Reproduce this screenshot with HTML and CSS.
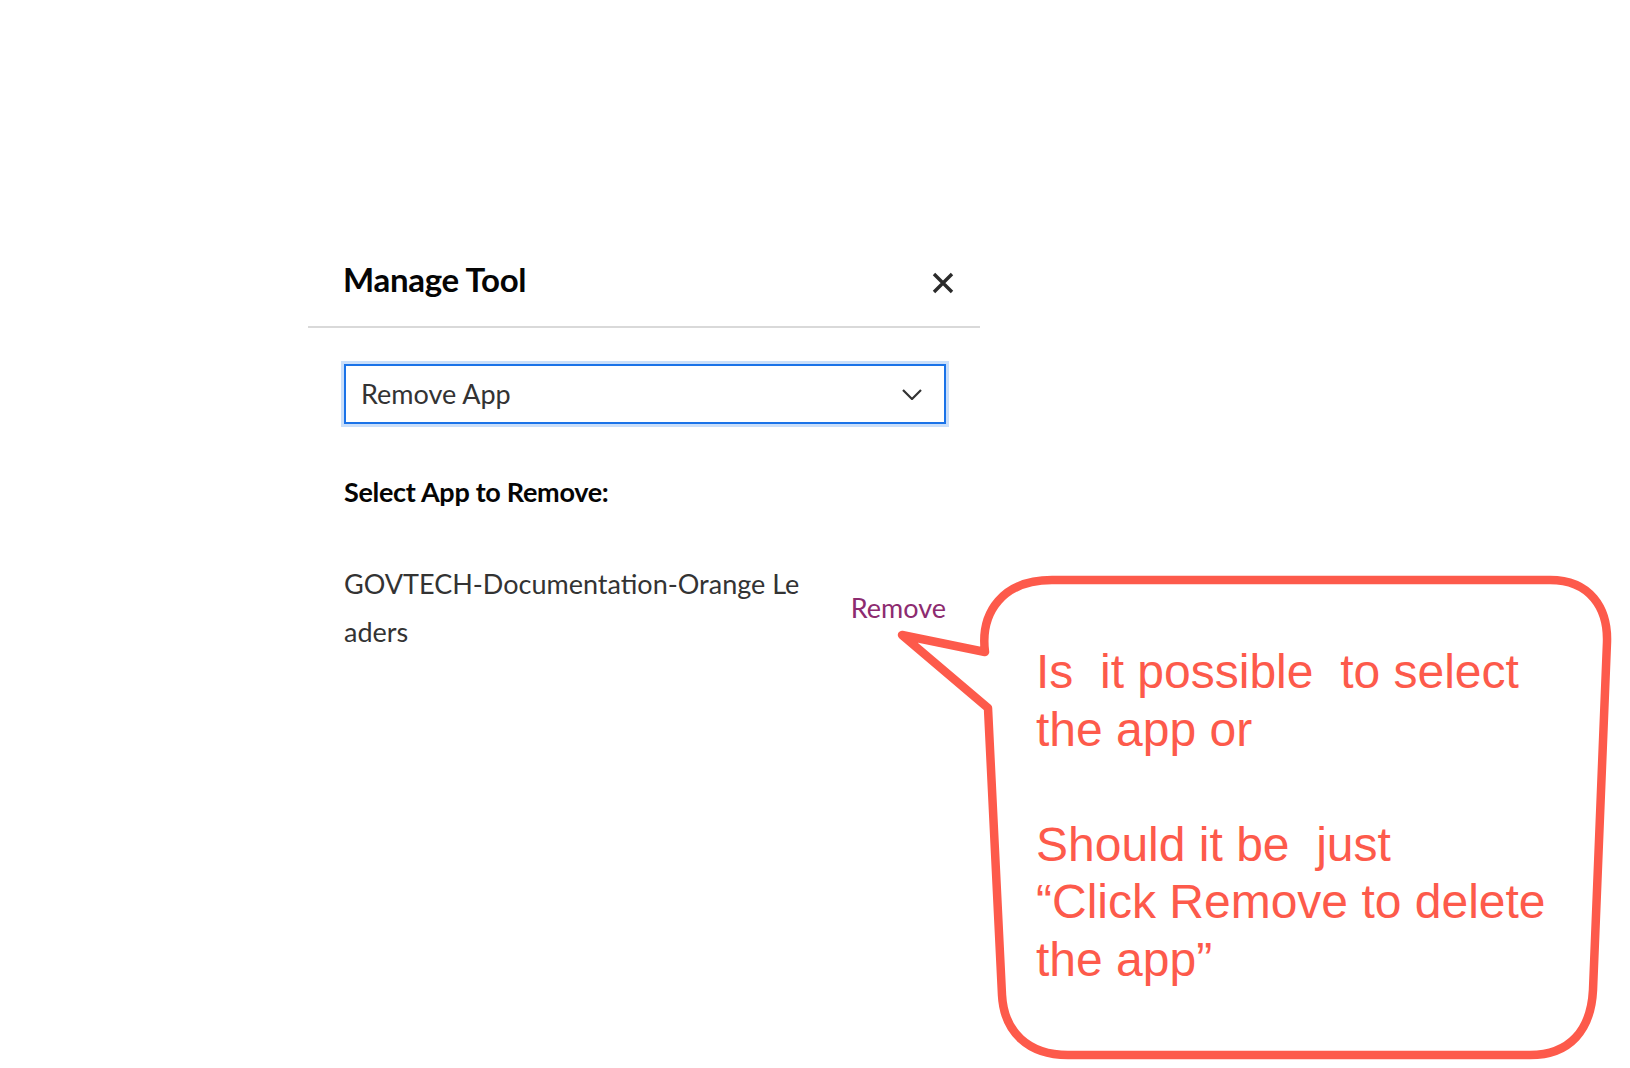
FILE: index.html
```html
<!DOCTYPE html>
<html lang="en">
<head>
<meta charset="utf-8">
<title>Manage Tool</title>
<link rel="stylesheet" href="styles.css">
</head>
<body>
<div class="stage">
  <div class="dialog">
    <div class="dialog-header">
      <h2 class="dialog-title">Manage Tool</h2>
      <button class="close-btn" aria-label="Close">
        <svg width="22" height="22" viewBox="0 0 22 22"><path d="M2 2 L20 20 M20 2 L2 20" stroke="#2b2b2b" stroke-width="3.4" fill="none" stroke-linecap="butt"/></svg>
      </button>
    </div>
    <div class="dialog-body">
      <div class="select">
        <span class="select-value">Remove App</span>
        <svg class="chevron" width="20" height="11" viewBox="0 0 20 11"><path d="M1 1 L10 10 L19 1" stroke="#333" stroke-width="2.2" fill="none"/></svg>
      </div>
      <div class="section-label">Select App to Remove:</div>
      <div class="app-row">
        <div class="app-name">GOVTECH-Documentation-Orange Leaders</div>
        <a class="remove-link" href="#">Remove</a>
      </div>
    </div>
  </div>

  <div class="callout">
    <svg class="callout-shape" width="1630" height="1068" viewBox="0 0 1630 1068">
      <path d="M985 652 C980 612, 1003 580, 1052 580 L1550 580 C1590 580, 1608 608, 1607 642 L1593 990 C1591 1030, 1570 1055, 1530 1055 L1068 1055 C1028 1055, 1004 1032, 1002 995 L988 708 L902 635 Z" fill="#ffffff" stroke="#fd5a4b" stroke-width="8.5" stroke-linejoin="round"/>
    </svg>
    <div class="callout-text">Is  it possible  to select
the app or

Should it be  just
“Click Remove to delete
the app”</div>
  </div>
</div>
</body>
</html>
```

FILE: styles.css
```css
html, body {
  margin: 0;
  padding: 0;
  background: #ffffff;
}

.stage {
  position: relative;
  width: 1630px;
  height: 1068px;
  overflow: hidden;
  background: #ffffff;
  font-family: Lato, "Open Sans", sans-serif;
}

.dialog {
  margin-left: 308px;
  width: 672px;
  padding-top: 250px;
}

.dialog-header {
  display: flex;
  justify-content: space-between;
  align-items: flex-start;
  height: 76px;
  border-bottom: 2px solid #d9d9d9;
  padding: 0 26px 0 35px;
}

.dialog-title {
  margin: 9px 0 0 0;
  font-size: 33px;
  line-height: 40px;
  font-weight: 700;
  color: #050505;
  letter-spacing: -0.3px;
}

.close-btn {
  margin-top: 22px;
  padding: 0;
  border: 0;
  background: none;
  width: 22px;
  height: 22px;
  display: block;
}

.close-btn svg {
  display: block;
}

.dialog-body {
  padding: 36px 34px 0 36px;
}

.select {
  box-sizing: border-box;
  width: 602px;
  height: 60px;
  border: 2px solid #1a73e8;
  box-shadow: 0 0 0 3px #cadffa;
  display: flex;
  align-items: center;
  justify-content: space-between;
  padding: 0 22px 0 15px;
}

.select-value {
  font-size: 27px;
  line-height: 32px;
  color: #333333;
}

.chevron {
  display: block;
}

.section-label {
  margin-top: 52px;
  font-size: 27px;
  line-height: 32px;
  font-weight: 700;
  color: #050505;
  letter-spacing: -0.3px;
}

.app-row {
  margin-top: 52px;
  width: 602px;
  display: flex;
  justify-content: space-between;
  align-items: center;
}

.app-name {
  width: 460px;
  font-size: 27px;
  line-height: 48px;
  color: #333333;
  word-break: break-all;
}

.remove-link {
  font-size: 27px;
  line-height: 32px;
  color: #8d2b70;
  text-decoration: none;
}

.callout-shape {
  position: absolute;
  left: 0;
  top: 0;
}

.callout-text {
  position: absolute;
  left: 1036px;
  top: 643px;
  font-family: "Liberation Sans", Arial, sans-serif;
  font-size: 48px;
  line-height: 57.5px;
  color: #fd5a4b;
  white-space: pre;
}
```
